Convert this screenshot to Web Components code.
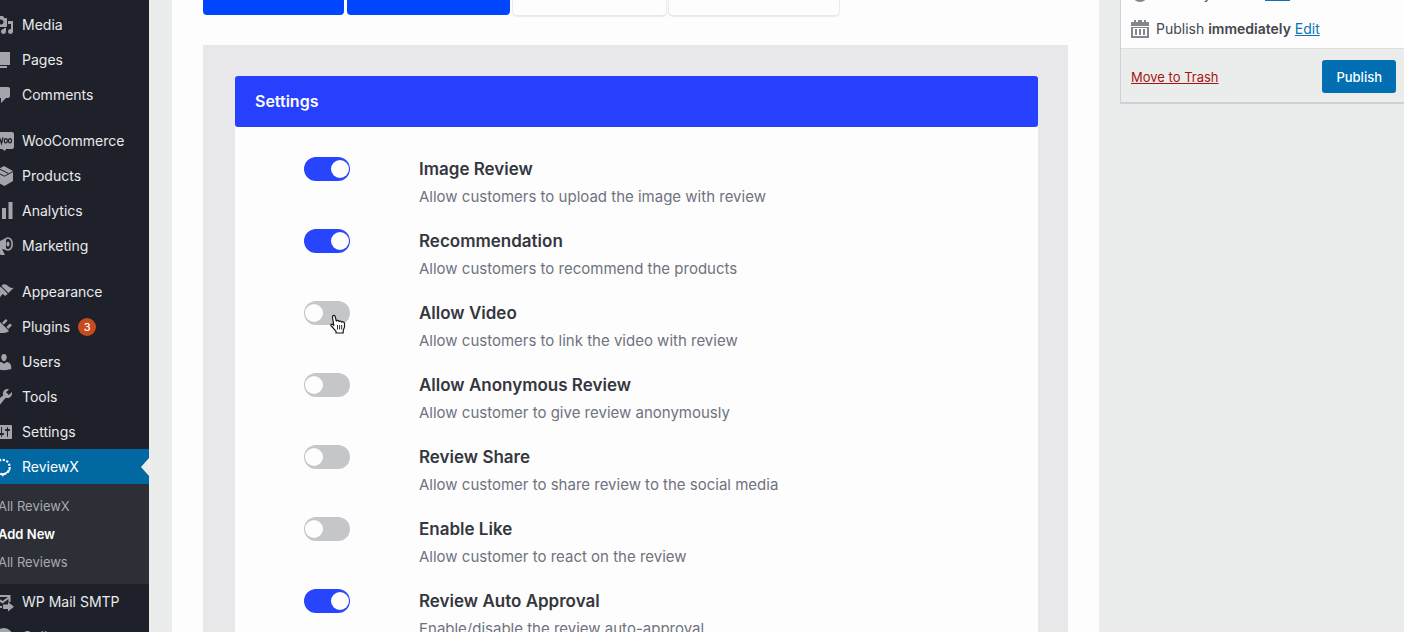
<!DOCTYPE html>
<html lang="en">
<head>
<meta charset="utf-8">
<title>Add New ReviewX</title>
<style>
html, body { margin: 0; height: 100%; }
body { font-family: Inter, "Open Sans", sans-serif; overflow: hidden; background: #ebedec; }
</style>
</head>
<body>
<rx-app></rx-app>
<script>
const ICONS = {
  media: '<path d="M13 11V4c0-.55-.45-1-1-1h-1.67L9 1H5L3.67 3H2c-.55 0-1 .45-1 1v7c0 .55.45 1 1 1h10c.55 0 1-.45 1-1zM7 4.5c1.38 0 2.5 1.12 2.5 2.5S8.38 9.5 7 9.5 4.5 8.38 4.5 7 5.62 4.5 7 4.5zM14 6h5v10.5c0 1.38-1.12 2.5-2.5 2.5S14 17.88 14 16.5s1.12-2.5 2.5-2.5c.17 0 .34.02.5.05V9h-3V6zm-4 8.05V13h2v3.5c0 1.38-1.12 2.5-2.5 2.5S7 17.88 7 16.5 8.12 14 9.5 14c.17 0 .34.02.5.05z"/>',
  page: '<path d="M6 15V2h10v13H6zm-1 1h8v2H3V5h2v11z"/>',
  comments: '<path d="M5 2h9c1.1 0 2 .9 2 2v7c0 1.1-.9 2-2 2h-2l-5 5v-5H5c-1.1 0-2-.9-2-2V4c0-1.1.9-2 2-2z"/>',
  woo: '<path d="M2 1h16a2 2 0 0 1 2 2v13a2 2 0 0 1-2 2h-6l-1 2-3-2H2a2 2 0 0 1-2-2V3a2 2 0 0 1 2-2z"/><path d="M2 6.500l1.500 6 2.500-4.500 1.500 4.500L9 6.500" fill="none" stroke="#1e2129" stroke-width="1.300"/><ellipse cx="11.800" cy="9.800" rx="1.500" ry="2.100" fill="none" stroke="#1e2129" stroke-width="1.200"/><ellipse cx="16" cy="9.800" rx="1.500" ry="2.100" fill="none" stroke="#1e2129" stroke-width="1.200"/>',
  products: '<path d="M10 0l9 5v10l-8.500 5L1 15V5z"/><path d="M1 5.500l9.500 4.700L19 5.500M5.500 3l9 4.500" fill="none" stroke="#1e2129" stroke-width="1"/>',
  analytics: '<path d="M1 11h4v7H1zM8 7h4v11H8zM14.500 1h4v17h-4z"/>',
  marketing: '<path d="M1 7.500L12 2v12l-4-1 3 6H6.500L4 12.500l-3-1z"/><ellipse cx="14" cy="8" rx="4.200" ry="6" fill="none" stroke="currentColor" stroke-width="1.600"/><ellipse cx="14" cy="8" rx="1.600" ry="2.500"/>',
  appearance: '<path d="M14.480 11.060L7.410 3.990l1.500-1.500c.5-.56 2.300-.47 3.510.32 1.210.8 1.430 1.280 2.910 2.100 1.180.64 2.450 1.260 4.450.85zm-.71.71L6.700 4.700 4.930 6.470c-.39.39-.39 1.020 0 1.410l1.060 1.060c.39.39.39 1.030 0 1.420-.6.6-1.430 1.110-2.210 1.690-.35.26-.7.53-1.010.84C1.430 14.230.4 16.080 1.400 17.070c.99 1 2.840-.03 4.180-1.360.31-.31.58-.66.85-1.020.57-.78 1.080-1.610 1.690-2.210.39-.39 1.020-.39 1.410 0l1.060 1.060c.39.39 1.020.39 1.410 0z"/>',
  plugins: '<path d="M13.110 4.360L9.870 7.600 8 5.730l3.240-3.240c.35-.34 1.050-.2 1.560.32.52.51.66 1.210.31 1.550zm-8 1.770l.91-1.120 9.010 9.010-1.190.84c-.71.71-2.630 1.160-3.820 1.160H6.140L4.900 17.260c-.59.59-1.540.59-2.120 0-.59-.58-.59-1.530 0-2.120l1.240-1.240v-3.880c0-1.130.4-3.190 1.090-3.890zm7.260 3.970l3.240-3.240c.34-.35 1.040-.21 1.550.31.52.51.66 1.210.31 1.550l-3.240 3.250z"/>',
  users: '<path d="M10 9.250c-2.270 0-2.730-3.440-2.730-3.440C7 4.020 7.820 2 9.970 2c2.160 0 2.980 2.020 2.710 3.810 0 0-.41 3.440-2.680 3.440zm0 2.570L12.720 10c2.390 0 4.520 2.330 4.520 4.530v2.490s-3.650 1.130-7.240 1.130c-3.650 0-7.240-1.130-7.240-1.130v-2.490c0-2.250 1.940-4.480 4.470-4.480z"/>',
  tools: '<path d="M16.680 9.770c-1.340 1.340-3.300 1.670-4.950.99l-5.410 6.520c-.99.99-2.590.99-3.580 0s-.99-2.590 0-3.570l6.520-5.420c-.68-1.650-.35-3.610.99-4.950 1.280-1.280 3.120-1.620 4.720-1.060l-2.890 2.890 2.820 2.820 2.860-2.870c.53 1.580.18 3.390-1.080 4.650z"/>',
  settings: '<path d="M18 16V4c0-.55-.45-1-1-1H3c-.55 0-1 .45-1 1v12c0 .55.45 1 1 1h14c.55 0 1-.45 1-1zM8 11h1c.55 0 1 .45 1 1s-.45 1-1 1H8v1.500c0 .28-.22.5-.5.5s-.5-.22-.5-.5V13H6c-.55 0-1-.45-1-1s.45-1 1-1h1V5.500c0-.28.22-.5.5-.5s.5.22.5.5V11zm5-2h-1c-.55 0-1-.45-1-1s.45-1 1-1h1V5.500c0-.28.22-.5.5-.5s.5.22.5.5V7h1c.55 0 1 .45 1 1s-.45 1-1 1h-1v5.500c0 .28-.22.5-.5.5s-.5-.22-.5-.5V9z"/>',
  reviewx: '<circle cx="8.500" cy="10" r="7.200" fill="none" stroke="currentColor" stroke-width="2.200" stroke-dasharray="2.200 1.570"/><path d="M16.500 12c-1 3.200-3.500 5.200-6.500 5.400L9 20l-2-3.800c4 .3 6.500-1.200 8-4.200z"/>',
  mail: '<path d="M0 3h16.500v7h-2V7L8.500 11.500 2 7v7h6v2H0zM3 5l5.500 4L14 5z" fill-rule="evenodd"/><path d="M9 12.500h5V10l6 4.800-6 4.700V17H9z"/>',
  collapse: '<path d="M10 1a9 9 0 1 1 0 18 9 9 0 0 1 0-18zm3 4l-7 5 7 5z" fill-rule="evenodd"/>',
  calendar: '<path d="M1 3h3V1h2v2h2V1h4v2h2V1h2v2h3v4H1zM1 8h18v11H1zm2 1v8h14V9z" fill-rule="evenodd"/><path d="M5 10h2v6H5zM9 10h2v6H9zM13 10h2v6h-2z"/>',
  eye: '<path d="M10 2a8 8 0 1 1 0 16 8 8 0 0 1 0-16zm0 4a4 4 0 1 0 0 8 4 4 0 0 0 0-8z" fill-rule="evenodd"/>'
};

/* Defines an element whose shadow root is rendered from its attributes. */
function define(name, render) {
  customElements.define(name, class extends HTMLElement {
    constructor() { super(); this.attachShadow({ mode: 'open' }); }
    connectedCallback() { if (!this.shadowRoot.hasChildNodes()) this.shadowRoot.innerHTML = render(this); }
  });
}

define('rx-icon', el => `
  <style>:host{display:block;flex:none;width:20px;height:20px} svg{display:block;width:100%;height:100%;fill:currentColor}</style>
  <svg viewBox="0 0 20 20" aria-hidden="true">${ICONS[el.getAttribute('name')]}</svg>`);

define('rx-menu-item', el => `
  <style>
    :host{display:block;color:#e9eaec;--icon:#a2a5ab}
    a{display:flex;align-items:center;gap:8px;height:35px;padding-left:8px;color:inherit;text-decoration:none;font-size:14px;line-height:20px;position:relative}
    rx-icon{color:var(--icon)}
    :host([current]){background:#0268a1;color:#fff;--icon:#fff}
    :host([current]) a::after{content:"";position:absolute;right:0;top:9px;border:solid transparent;border-width:9px 8px 9px 0;border-right-color:#ebedec}
    :host([dim]){color:#a2a5ab}
  </style>
  <a href="#"${el.hasAttribute('current') ? ' aria-current="page"' : ''}><rx-icon name="${el.getAttribute('icon')}"></rx-icon><slot></slot></a>`);

define('rx-badge', () => `
  <style>:host{display:block;width:18px;line-height:18px;border-radius:9px;background:#ca4a1f;color:#fff;font-size:11px;font-weight:500;text-align:center}</style><slot></slot>`);

define('rx-submenu', () => `
  <style>
    :host{display:block;background:#2c2f36;padding:8px 0}
    a{display:block;padding-left:12px;font-size:13px;line-height:28px;color:#a9abb1;text-decoration:none}
    a[aria-current]{color:#fff;font-weight:600}
  </style>
  <a href="#">All ReviewX</a><a href="#" aria-current="page">Add New</a><a href="#">All Reviews</a>`);

define('rx-sidebar', () => `
  <style>
    :host{display:block;flex:none;width:163px;margin-left:-14px;background:#1e2129}
    nav{display:flex;flex-direction:column;gap:11px;padding-top:7px}
  </style>
  <nav aria-label="Main menu">
    <div>
      <rx-menu-item icon="media">Media</rx-menu-item>
      <rx-menu-item icon="page">Pages</rx-menu-item>
      <rx-menu-item icon="comments">Comments</rx-menu-item>
    </div>
    <div>
      <rx-menu-item icon="woo">WooCommerce</rx-menu-item>
      <rx-menu-item icon="products">Products</rx-menu-item>
      <rx-menu-item icon="analytics">Analytics</rx-menu-item>
      <rx-menu-item icon="marketing">Marketing</rx-menu-item>
    </div>
    <div>
      <rx-menu-item icon="appearance">Appearance</rx-menu-item>
      <rx-menu-item icon="plugins">Plugins <rx-badge>3</rx-badge></rx-menu-item>
      <rx-menu-item icon="users">Users</rx-menu-item>
      <rx-menu-item icon="tools">Tools</rx-menu-item>
      <rx-menu-item icon="settings">Settings</rx-menu-item>
      <rx-menu-item icon="reviewx" current>ReviewX</rx-menu-item>
      <rx-submenu></rx-submenu>
      <rx-menu-item icon="mail">WP Mail SMTP</rx-menu-item>
      <rx-menu-item icon="collapse" dim>Collapse menu</rx-menu-item>
    </div>
  </nav>`);

define('rx-steps', () => `
  <style>
    :host{display:flex;gap:3px}
    button{height:15px;padding:0;border:0;border-radius:0 0 4px 4px;background:#fdfdfd;box-shadow:0 1px 1px 1px #e8eaea}
    .done{background:#0146ff;box-shadow:none}
    button:nth-of-type(1){width:141px} button:nth-of-type(2){width:163px}
    button:nth-of-type(3){width:153px} button:nth-of-type(4){width:170px}
  </style>
  <button class="done" aria-label="Step 1"></button><button class="done" aria-label="Step 2"></button><button aria-label="Step 3"></button><button aria-label="Step 4"></button>`);

define('rx-setting', el => `
  <style>
    :host{display:grid;grid-template-columns:46px 1fr;column-gap:69px;height:72px;position:relative}
    input{appearance:none;box-sizing:border-box;width:46px;height:24px;margin:1px 0 0;padding:0 1px;border-radius:12px;background:#c5c6ca;display:flex;align-items:center}
    input::before{content:"";width:18px;height:18px;border-radius:50%;background:#fdfdfd}
    input:checked{background:#2745fd;justify-content:flex-end}
    label{display:block;font-size:17px;font-weight:600;line-height:26px;color:#35373f}
    p{margin:0;font-size:15px;line-height:30px;color:#70727d}
    ::slotted(rx-pointer){position:absolute;left:25px;top:14px}
  </style>
  <input type="checkbox" role="switch" id="c" aria-describedby="d"${el.hasAttribute('on') ? ' checked' : ''}>
  <div><label for="c">${el.getAttribute('label')}</label><p id="d">${el.getAttribute('hint')}</p></div><slot></slot>`);

define('rx-pointer', () => `
  <style>:host{display:block;width:17px;height:20px} svg{display:block}</style>
  <svg width="17" height="20" viewBox="0 0 17 20" aria-hidden="true"><path d="M4.800 11.500L3.500 3.500C3.200 1 5.800.6 6.300 2.800L7.300 7c.8-.9 2.300-.7 2.700.5.900-.9 2.300-.5 2.600.6 1-.7 2.600-.2 2.900 1.200.4 2.500 0 5.200-1.300 7.200V19H7v-1.800c-1.500-1.400-2.700-3.400-4.700-5.200-1.300-1.300.600-2.900 2.500-.5z" fill="#fff" stroke="#15161a" stroke-width="1.200" stroke-linejoin="round"/><path d="M8.500 11v4.500M10.600 11v4.500M12.700 11v4.500" stroke="#15161a" stroke-width=".9"/></svg>`);

define('rx-panel', () => `
  <style>
    :host{display:block;background:#e8e8ea;padding:31px 30px 31px 32px}
    h2{margin:0;padding:0 20px;background:#2740fd;color:#fdfdff;border-radius:3px;font-size:16px;font-weight:600;line-height:51px}
    .body{background:#fdfdfd;padding:29px 69px}
  </style>
  <h2>Settings</h2><div class="body"><slot></slot></div>`);

define('rx-publish-box', () => `
  <style>
    :host{display:block;flex:none;box-sizing:border-box;width:284px;margin-top:-24px;border:solid #cfd1da;border-width:0 0 2px 1px;background:#fdfdfd;color:#44474d;font-size:14px;line-height:20px}
    .row{display:flex;align-items:center;gap:6px;height:35px;padding-left:9px}
    rx-icon{color:#82858b}
    b{font-weight:600}
    a{color:#0a74b3}
    .foot{display:flex;align-items:center;justify-content:space-between;padding:11px 8px 9px 10px;margin-top:2px;background:#ebedec;border-top:1px solid #dfe1e1;font-size:13px}
    .trash{color:#a81414}
    button{height:33px;padding:0 14px;border:0;border-radius:3px;background:#016fb2;color:#fff;font:500 13px/20px Inter,sans-serif}
  </style>
  <div class="row"><rx-icon name="eye"></rx-icon><span>Visibility: <b>Public</b> <a href="#">Edit</a></span></div>
  <div class="row"><rx-icon name="calendar"></rx-icon><span>Publish <b>immediately</b> <a href="#">Edit</a></span></div>
  <div class="foot"><a class="trash" href="#">Move to Trash</a><button type="button">Publish</button></div>`);

define('rx-app', () => `
  <style>
    :host{display:flex;height:100vh;overflow:hidden}
    main{flex:1;min-width:0;margin:0 21px 0 23px;padding:0 31px;background:#fdfdfd;overflow:hidden}
    rx-panel{margin-top:30px}
    rx-publish-box{align-self:flex-start}
  </style>
  <rx-sidebar></rx-sidebar>
  <main>
    <rx-steps></rx-steps>
    <rx-panel>
      <rx-setting on label="Image Review" hint="Allow customers to upload the image with review"></rx-setting>
      <rx-setting on label="Recommendation" hint="Allow customers to recommend the products"></rx-setting>
      <rx-setting label="Allow Video" hint="Allow customers to link the video with review"><rx-pointer></rx-pointer></rx-setting>
      <rx-setting label="Allow Anonymous Review" hint="Allow customer to give review anonymously"></rx-setting>
      <rx-setting label="Review Share" hint="Allow customer to share review to the social media"></rx-setting>
      <rx-setting label="Enable Like" hint="Allow customer to react on the review"></rx-setting>
      <rx-setting on label="Review Auto Approval" hint="Enable/disable the review auto-approval"></rx-setting>
    </rx-panel>
  </main>
  <rx-publish-box></rx-publish-box>`);
</script>
</body>
</html>
